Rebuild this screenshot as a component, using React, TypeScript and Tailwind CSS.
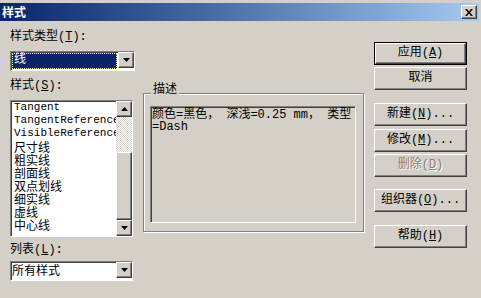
import React from "react";

const raised =
  "border border-t-white border-l-white border-r-[#404040] border-b-[#404040] shadow-[inset_-1px_-1px_0_#808080]";
const sunken =
  "border border-t-[#808080] border-l-[#808080] border-r-white border-b-white shadow-[inset_1px_1px_0_#404040]";

function DownArrow() {
  return (
    <svg width="7" height="4" viewBox="0 0 7 4">
      <polygon points="0,0 7,0 3.5,4" fill="#000" />
    </svg>
  );
}

function UpArrow() {
  return (
    <svg width="7" height="4" viewBox="0 0 7 4">
      <polygon points="0,4 7,4 3.5,0" fill="#000" />
    </svg>
  );
}

function DropButton() {
  return (
    <div className={`${raised} w-[16px] h-[16px] bg-[#d4d0c8] flex items-center justify-center shrink-0`}>
      <DownArrow />
    </div>
  );
}

function Btn({
  children,
  isDefault,
  disabled,
  className = "",
}: {
  children: React.ReactNode;
  isDefault?: boolean;
  disabled?: boolean;
  className?: string;
}) {
  const inner = (
    <div
      className={`${raised} h-full w-full bg-[#d4d0c8] flex items-center justify-center text-[12px] leading-[13px] whitespace-nowrap ${
        disabled ? "text-[#808080] [text-shadow:1px_1px_0_#fff]" : "text-black"
      }`}
    >
      {children}
    </div>
  );
  if (isDefault) {
    return <div className={`border border-black w-[93px] h-[23px] ${className}`}>{inner}</div>;
  }
  return <div className={`w-[93px] h-[23px] ${className}`}>{inner}</div>;
}

const items = [
  { t: "Tangent", latin: true },
  { t: "TangentReference", latin: true },
  { t: "VisibleReference", latin: true },
  { t: "尺寸线" },
  { t: "粗实线" },
  { t: "剖面线" },
  { t: "双点划线" },
  { t: "细实线" },
  { t: "虚线" },
  { t: "中心线" },
];

export default function App() {
  return (
    <div className="w-[481px] h-[298px] bg-[#d4d0c8] overflow-hidden pt-[3px] font-['Liberation_Mono','Noto_Sans_CJK_SC',monospace] text-black text-[12px]">
      {/* Title bar */}
      <div className="w-[479px] h-[18px] flex items-center bg-gradient-to-r from-[#0a246a] to-[#a6caf0]">
        <span className="pl-[2px] text-white font-bold text-[12px] leading-[14px] font-['Noto_Sans_CJK_SC',sans-serif]">
          样式
        </span>
        <div className={`${raised} ml-auto mr-[2px] w-[16px] h-[14px] bg-[#d4d0c8] flex items-center justify-center`}>
          <svg width="8" height="7" viewBox="0 0 8 7">
            <path d="M0 0h2l2 2.5 2-2.5h2l-3 3.5 3 3.5h-2l-2-2.5-2 2.5h-2l3-3.5z" fill="#000" />
          </svg>
        </div>
      </div>

      <div className="flex items-start">
        {/* Left column */}
        <div className="ml-[10px] w-[125px] flex flex-col">
          <div className="mt-[10px] h-[13px] leading-[13px]">
            样式类型(<u>T</u>):
          </div>
          <div className={`${sunken} mt-[7px] w-[125px] h-[20px] bg-white flex`}>
            <div className="flex-1 p-[1px]">
              <div className="h-full bg-[#0a246a] border border-dotted border-[#ffffc0] text-white leading-[12px] pl-[1px]">
                线
              </div>
            </div>
            <DropButton />
          </div>

          <div className="mt-[9px] h-[13px] leading-[13px]">
            样式(<u>S</u>):
          </div>
          <div className={`${sunken} mt-[7px] w-[123px] h-[137px] bg-white flex`}>
            <div className="flex-1 overflow-hidden whitespace-nowrap pl-[3px]">
              {items.map((it) =>
                it.latin ? (
                  <div key={it.t} className="h-[13px] leading-[13px] text-[11px] font-['Liberation_Mono',monospace]">
                    {it.t}
                  </div>
                ) : (
                  <div key={it.t} className="h-[13px] leading-[13px] text-[12px] font-['Noto_Sans_CJK_SC',sans-serif]">
                    {it.t}
                  </div>
                )
              )}
            </div>
            <div className="w-[16px] h-full flex flex-col shrink-0">
              <div className={`${raised} h-[16px] bg-[#d4d0c8] flex items-center justify-center`}>
                <UpArrow />
              </div>
              <div className="flex-1 bg-[repeating-conic-gradient(#d4d0c8_0_25%,#ffffff_0_50%)] bg-[length:2px_2px]" />
              <div className={`${raised} h-[68px] bg-[#d4d0c8]`} />
              <div className={`${raised} h-[16px] bg-[#d4d0c8] flex items-center justify-center`}>
                <DownArrow />
              </div>
            </div>
          </div>

          <div className="mt-[7px] h-[13px] leading-[13px]">
            列表(<u>L</u>):
          </div>
          <div className={`${sunken} mt-[4px] w-[123px] h-[20px] bg-white flex`}>
            <div className="flex-1 pl-[1px] leading-[16px] font-['Noto_Sans_CJK_SC',sans-serif]">所有样式</div>
            <DropButton />
          </div>
        </div>

        {/* Description group */}
        <div className="ml-[8px] mt-[63px] w-[221px] flex flex-col">
          <div className="relative self-start ml-[8px] mb-[-4px] px-[2px] h-[13px] leading-[13px] bg-[#d4d0c8]">
            描述
          </div>
          <div className="h-[139px] border border-[#808080] shadow-[inset_1px_1px_0_#fff,1px_1px_0_#fff] pt-[12px] pl-[6px] pr-[7px] pb-[8px]">
            <div className={`${sunken} w-full h-full bg-[#d4d0c8] pl-[1px] pt-[2px] leading-[12px]`}>
              颜色=黑色，&nbsp;深浅=0.25 mm，&nbsp;类型
              <br />
              =Dash
            </div>
          </div>
        </div>

        {/* Buttons */}
        <div className="ml-[10px] mt-[21px] flex flex-col">
          <Btn isDefault>
            应用(<u>A</u>)
          </Btn>
          <Btn className="mt-[2px]">取消</Btn>
          <Btn className="mt-[13px]">
            新建(<u>N</u>)...
          </Btn>
          <Btn className="mt-[3px]">
            修改(<u>M</u>)...
          </Btn>
          <Btn className="mt-[2px]" disabled>
            删除(<u>D</u>)
          </Btn>
          <Btn className="mt-[12px]">
            组织器(<u>O</u>)...
          </Btn>
          <Btn className="mt-[13px]">
            帮助(<u>H</u>)
          </Btn>
        </div>
      </div>
    </div>
  );
}
